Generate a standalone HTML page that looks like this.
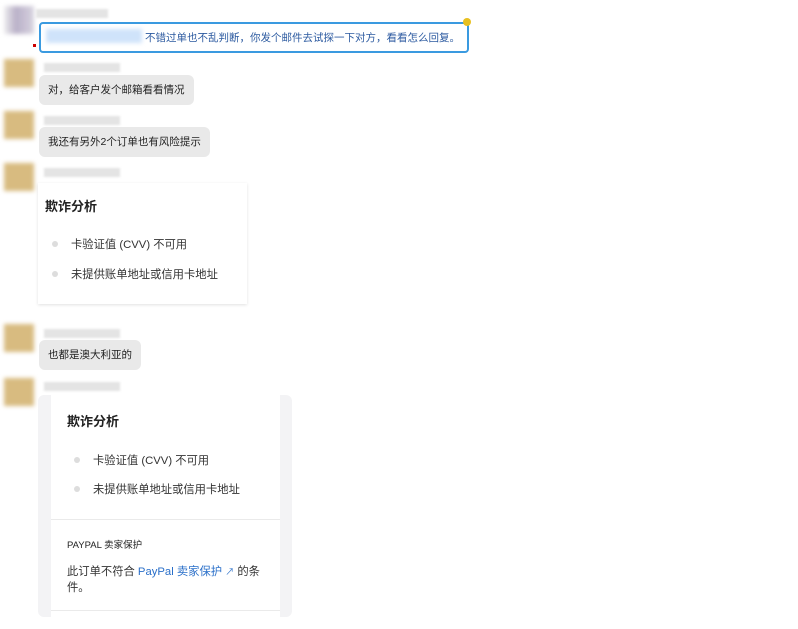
<!DOCTYPE html>
<html><head><meta charset="utf-8"><style>
body{margin:0;width:798px;height:629px;background:#fff;font-family:"Liberation Sans","Noto Sans CJK SC",sans-serif;position:relative;overflow:hidden;color:#333}
.a{position:absolute}
.av{position:absolute;width:30px;height:28px;filter:blur(2px)}
.nm{position:absolute;height:9px;background:#e4e4e4;filter:blur(1px)}
.bub{position:absolute;background:#e9e9e9;border-radius:6px;font-size:10.5px;line-height:30px;padding:0 9px;color:#222}
.dot{position:absolute;width:6px;height:6px;border-radius:3px;background:#ddd}
.t{position:absolute;font-size:11.3px;color:#333;white-space:nowrap}
h3{position:absolute;margin:0;font-size:13px;font-weight:bold;color:#222}
</style></head><body>
<div class="av" style="left:4px;top:6px;background:linear-gradient(90deg,#eee,#b9b0c8 40%,#d8d4e0);"></div>
<div class="nm" style="left:36px;top:9px;width:72px"></div>
<div class="a" style="left:39px;top:22px;width:426px;height:27px;border:2px solid #3a9ae0;border-radius:4px;background:#fff"></div>
<div class="a" style="left:46px;top:29px;width:96px;height:14px;background:#cfe3fa;filter:blur(2px)"></div>
<div class="t" style="left:145px;top:30px;color:#2c5aa0;font-size:10.5px">不错过单也不乱判断，你发个邮件去试探一下对方，看看怎么回复。</div>
<div class="a" style="left:463px;top:18px;width:8px;height:8px;border-radius:4px;background:#e8c020"></div>
<div class="a" style="left:33px;top:44px;width:3px;height:3px;background:#c00"></div>

<div class="av" style="left:4px;top:59px;background:#d8bb80"></div>
<div class="nm" style="left:44px;top:63px;width:76px"></div>
<div class="bub" style="left:39px;top:75px">对，给客户发个邮箱看看情况</div>

<div class="av" style="left:4px;top:111px;background:#d8bb80"></div>
<div class="nm" style="left:44px;top:116px;width:76px"></div>
<div class="bub" style="left:39px;top:127px">我还有另外2个订单也有风险提示</div>

<div class="av" style="left:4px;top:163px;background:#d8bb80"></div>
<div class="nm" style="left:44px;top:168px;width:76px"></div>
<div class="a" style="left:38px;top:183px;width:209px;height:121px;background:#fff;box-shadow:0 1px 3px rgba(0,0,0,.12)"></div>
<h3 style="left:45px;top:196px">欺诈分析</h3>
<div class="dot" style="left:52px;top:241px"></div>
<div class="t" style="left:71px;top:236px">卡验证值 (CVV) 不可用</div>
<div class="dot" style="left:52px;top:271px"></div>
<div class="t" style="left:71px;top:266px">未提供账单地址或信用卡地址</div>

<div class="av" style="left:4px;top:324px;background:#d8bb80"></div>
<div class="nm" style="left:44px;top:329px;width:76px"></div>
<div class="bub" style="left:39px;top:340px">也都是澳大利亚的</div>

<div class="av" style="left:4px;top:378px;background:#d8bb80"></div>
<div class="nm" style="left:44px;top:382px;width:76px"></div>
<div class="a" style="left:38px;top:395px;width:254px;height:222px;background:#f3f3f5;border-radius:6px"></div>
<div class="a" style="left:51px;top:395px;width:229px;height:222px;background:#fff"></div>
<h3 style="left:67px;top:411px">欺诈分析</h3>
<div class="dot" style="left:74px;top:457px"></div>
<div class="t" style="left:93px;top:452px">卡验证值 (CVV) 不可用</div>
<div class="dot" style="left:74px;top:486px"></div>
<div class="t" style="left:93px;top:481px">未提供账单地址或信用卡地址</div>
<div class="a" style="left:51px;top:519px;width:229px;height:1px;background:#eaeaea"></div>
<div class="t" style="left:67px;top:537px;font-size:9.5px;color:#222">PAYPAL 卖家保护</div>
<div class="t" style="left:67px;top:563px">此订单不符合 <span style="color:#2a6fc9">PayPal 卖家保护 <span style="font-size:9px">↗</span></span> 的条</div>
<div class="t" style="left:67px;top:579px">件。</div>
<div class="a" style="left:51px;top:610px;width:229px;height:1px;background:#eaeaea"></div>
</body></html>
